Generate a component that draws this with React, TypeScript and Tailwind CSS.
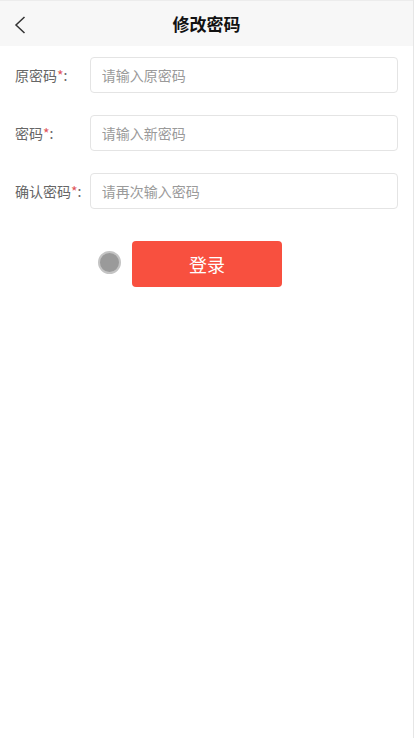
import React from 'react';

const fields = [
  { label: '原密码', placeholder: '请输入原密码' },
  { label: '密码', placeholder: '请输入新密码' },
  { label: '确认密码', placeholder: '请再次输入密码' },
];

const App = () => {
  return (
    <main
      className="w-[414px] min-h-[738px] bg-white border-r border-[#e6e6e6] text-[#333]"
      style={{ fontFamily: '"Noto Sans CJK SC", "Noto Sans", sans-serif' }}
    >
      <header className="relative h-[46px] bg-[#f7f7f7] border-t border-[#ececec] flex items-center justify-center">
        <button className="absolute left-[12px] top-[14px] w-[16px] h-[20px] flex items-center justify-center">
          <svg width="12" height="18" viewBox="0 0 12 18" fill="none">
            <path d="M10.5 1 L2 9 L10.5 17" stroke="#333" strokeWidth="1.5" />
          </svg>
        </button>
        <h1 className="text-[17px] font-bold text-[#111] leading-none">修改密码</h1>
      </header>

      <section className="flex flex-col gap-[22px] pt-[11px] pl-[15px] pr-[15px]">
        {fields.map((f) => (
          <div key={f.label} className="flex items-center">
            <label className="w-[75px] text-[14px] text-[#666] whitespace-nowrap">
              {f.label}
              <span className="text-[#e0555a]">*</span>:
            </label>
            <input
              type="password"
              placeholder={f.placeholder}
              className="w-[309px] h-[36px] rounded-[4px] border border-[#e4e4e4] px-[11px] text-[14px] outline-none placeholder:text-[#9a9a9a]"
            />
          </div>
        ))}
      </section>

      <div className="flex items-start pl-[98px] mt-[32px]">
        <span className="mt-[10px] w-[23px] h-[23px] rounded-full bg-[#9a9a9a] border-2 border-[#c4c4c4]" />
        <button className="ml-[11px] w-[150px] h-[46px] rounded-[4px] bg-[#f8503f] text-white text-[18px]">
          登录
        </button>
      </div>
    </main>
  );
};

export default App;
